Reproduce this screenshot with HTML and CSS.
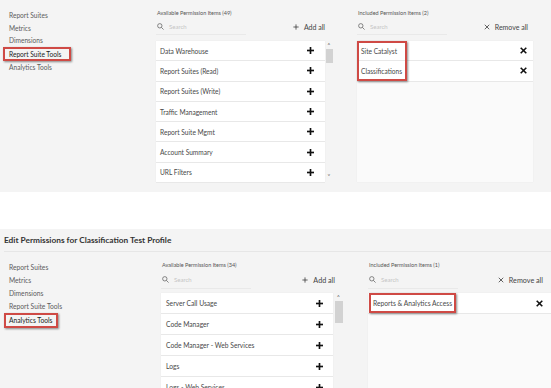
FILE: index.html
```html
<!DOCTYPE html>
<html lang="en">
<head>
<meta charset="UTF-8" />
<meta name="viewport" content="width=device-width, initial-scale=1" />
<title>Edit Permissions</title>
<link rel="stylesheet" href="styles.css">
</head>
<body>
    <!-- first capture: report suite tools -->
    <section class="panel panel-top">
        <div class="editor">
            <ul class="nav">
                <li>Report Suites</li>
                <li>Metrics</li>
                <li>Dimensions</li>
                <li><span class="marked">Report Suite Tools</span></li>
                <li>Analytics Tools</li>
            </ul>
            <div class="col col-avail">
                <div class="col-head">Available Permission Items (49)</div>
                <div class="search-row">
                    <div class="search">
                        <svg class="icon-search" viewBox="0 0 8 8"><circle cx="3.2" cy="3.2" r="2.5"/><line x1="5" y1="5" x2="7.5" y2="7.5"/></svg>
                        <span>Search</span>
                    </div>
                    <div class="action">
                        <svg class="icon-thin" viewBox="0 0 8 8"><line x1="4" y1="0.5" x2="4" y2="7.5"/><line x1="0.5" y1="4" x2="7.5" y2="4"/></svg>
                        Add all
                    </div>
                </div>
                <div class="list">
                    <div class="rows">
                        <div class="row"><span>Data Warehouse</span><svg class="icon-bold" viewBox="0 0 8 8"><line x1="4" y1="0" x2="4" y2="8"/><line x1="0" y1="4" x2="8" y2="4"/></svg></div>
                        <div class="row"><span>Report Suites (Read)</span><svg class="icon-bold" viewBox="0 0 8 8"><line x1="4" y1="0" x2="4" y2="8"/><line x1="0" y1="4" x2="8" y2="4"/></svg></div>
                        <div class="row"><span>Report Suites (Write)</span><svg class="icon-bold" viewBox="0 0 8 8"><line x1="4" y1="0" x2="4" y2="8"/><line x1="0" y1="4" x2="8" y2="4"/></svg></div>
                        <div class="row"><span>Traffic Management</span><svg class="icon-bold" viewBox="0 0 8 8"><line x1="4" y1="0" x2="4" y2="8"/><line x1="0" y1="4" x2="8" y2="4"/></svg></div>
                        <div class="row"><span>Report Suite Mgmt</span><svg class="icon-bold" viewBox="0 0 8 8"><line x1="4" y1="0" x2="4" y2="8"/><line x1="0" y1="4" x2="8" y2="4"/></svg></div>
                        <div class="row"><span>Account Summary</span><svg class="icon-bold" viewBox="0 0 8 8"><line x1="4" y1="0" x2="4" y2="8"/><line x1="0" y1="4" x2="8" y2="4"/></svg></div>
                        <div class="row"><span>URL Filters</span><svg class="icon-bold" viewBox="0 0 8 8"><line x1="4" y1="0" x2="4" y2="8"/><line x1="0" y1="4" x2="8" y2="4"/></svg></div>
                    </div>
                    <div class="scroll">
                        <span class="arrow">&#x2c4;</span>
                        <div class="thumb"></div>
                        <span class="arrow arrow-down">&#x2c5;</span>
                    </div>
                </div>
            </div>
            <div class="col col-incl">
                <div class="col-head">Included Permission Items (2)</div>
                <div class="search-row">
                    <div class="search">
                        <svg class="icon-search" viewBox="0 0 8 8"><circle cx="3.2" cy="3.2" r="2.5"/><line x1="5" y1="5" x2="7.5" y2="7.5"/></svg>
                        <span>Search</span>
                    </div>
                    <div class="action">
                        <svg class="icon-thin" viewBox="0 0 8 8"><line x1="1" y1="1" x2="7" y2="7"/><line x1="7" y1="1" x2="1" y2="7"/></svg>
                        Remove all
                    </div>
                </div>
                <div class="list list-incl">
                    <div class="rows">
                        <div class="row"><span>Site Catalyst</span><svg class="icon-bold" viewBox="0 0 8 8"><line x1="0.8" y1="0.8" x2="7.2" y2="7.2"/><line x1="7.2" y1="0.8" x2="0.8" y2="7.2"/></svg></div>
                        <div class="row"><span>Classifications</span><svg class="icon-bold" viewBox="0 0 8 8"><line x1="0.8" y1="0.8" x2="7.2" y2="7.2"/><line x1="7.2" y1="0.8" x2="0.8" y2="7.2"/></svg></div>
                    </div>
                    <div class="callout callout-two"></div>
                </div>
            </div>
        </div>
    </section>

    <div class="spacer"></div>

    <!-- second capture: analytics tools -->
    <section class="panel panel-bottom">
        <h2 class="title">Edit Permissions for Classification Test Profile</h2>
        <div class="editor">
            <ul class="nav">
                <li>Report Suites</li>
                <li>Metrics</li>
                <li>Dimensions</li>
                <li>Report Suite Tools</li>
                <li><span class="marked">Analytics Tools</span></li>
            </ul>
            <div class="col col-avail">
                <div class="col-head">Available Permission Items (34)</div>
                <div class="search-row">
                    <div class="search">
                        <svg class="icon-search" viewBox="0 0 8 8"><circle cx="3.2" cy="3.2" r="2.5"/><line x1="5" y1="5" x2="7.5" y2="7.5"/></svg>
                        <span>Search</span>
                    </div>
                    <div class="action">
                        <svg class="icon-thin" viewBox="0 0 8 8"><line x1="4" y1="0.5" x2="4" y2="7.5"/><line x1="0.5" y1="4" x2="7.5" y2="4"/></svg>
                        Add all
                    </div>
                </div>
                <div class="list">
                    <div class="rows">
                        <div class="row"><span>Server Call Usage</span><svg class="icon-bold" viewBox="0 0 8 8"><line x1="4" y1="0" x2="4" y2="8"/><line x1="0" y1="4" x2="8" y2="4"/></svg></div>
                        <div class="row"><span>Code Manager</span><svg class="icon-bold" viewBox="0 0 8 8"><line x1="4" y1="0" x2="4" y2="8"/><line x1="0" y1="4" x2="8" y2="4"/></svg></div>
                        <div class="row"><span>Code Manager - Web Services</span><svg class="icon-bold" viewBox="0 0 8 8"><line x1="4" y1="0" x2="4" y2="8"/><line x1="0" y1="4" x2="8" y2="4"/></svg></div>
                        <div class="row"><span>Logs</span><svg class="icon-bold" viewBox="0 0 8 8"><line x1="4" y1="0" x2="4" y2="8"/><line x1="0" y1="4" x2="8" y2="4"/></svg></div>
                        <div class="row"><span>Logs - Web Services</span><svg class="icon-bold" viewBox="0 0 8 8"><line x1="4" y1="0" x2="4" y2="8"/><line x1="0" y1="4" x2="8" y2="4"/></svg></div>
                    </div>
                    <div class="scroll">
                        <span class="arrow">&#x2c4;</span>
                        <div class="thumb"></div>
                    </div>
                </div>
            </div>
            <div class="col col-incl">
                <div class="col-head">Included Permission Items (1)</div>
                <div class="search-row">
                    <div class="search">
                        <svg class="icon-search" viewBox="0 0 8 8"><circle cx="3.2" cy="3.2" r="2.5"/><line x1="5" y1="5" x2="7.5" y2="7.5"/></svg>
                        <span>Search</span>
                    </div>
                    <div class="action">
                        <svg class="icon-thin" viewBox="0 0 8 8"><line x1="1" y1="1" x2="7" y2="7"/><line x1="7" y1="1" x2="1" y2="7"/></svg>
                        Remove all
                    </div>
                </div>
                <div class="list list-incl">
                    <div class="rows">
                        <div class="row"><span>Reports &amp; Analytics Access</span><svg class="icon-bold" viewBox="0 0 8 8"><line x1="0.8" y1="0.8" x2="7.2" y2="7.2"/><line x1="7.2" y1="0.8" x2="0.8" y2="7.2"/></svg></div>
                    </div>
                    <div class="callout callout-one"></div>
                </div>
            </div>
        </div>
    </section>
</body>
</html>
```

FILE: styles.css
```css
:root {
    --panel-bg: #f4f4f4;
    --text: #505050;
    --text-dark: #222;
    --line: #e8e8e8;
    --mark: #cf4a45;
}

body, html {
    margin: 0;
    padding: 0;
    background: #fff;
    font-family: Lato, "Open Sans", sans-serif;
    color: var(--text);
    overflow: hidden;
}

.panel {
    background: var(--panel-bg);
    overflow: hidden;
}

.panel-top {
    height: 192px;
    padding-top: 9px;
    box-sizing: border-box;
}

.spacer {
    height: 37px;
}

.panel-bottom {
    height: 159px;
}

.title {
    margin: 0 0 0 4px;
    height: 22px;
    line-height: 22px;
    font-size: 8.3px;
    font-weight: 700;
    color: #333;
    border-bottom: 1px solid #e6e6e6;
}

.editor {
    display: flex;
}

.panel-bottom .editor {
    padding-top: 9px;
}

/* left menu */
.nav {
    list-style: none;
    margin: 0;
    padding: 0 0 0 9px;
    width: 147px;
    flex-shrink: 0;
    font-size: 6.6px;
    line-height: 12.5px;
    color: #5c5c5c;
}

.panel-bottom .nav {
    width: 152px;
    line-height: 13px;
    font-size: 6.7px;
}

.marked {
    display: inline-block;
    margin-left: -6px;
    padding: 0 8px 0 4px;
    line-height: 10px;
    color: var(--text-dark);
    border: 2px solid var(--mark);
    box-shadow: 1px 1px 2px rgba(0,0,0,0.45);
}

.panel-bottom .marked {
    margin-left: -5px;
    padding: 0 3px 0 3px;
    line-height: 11px;
}

/* columns */
.col-avail {
    width: 177px;
    flex-shrink: 0;
}

.col-incl {
    width: 176px;
    margin-left: 24px;
    flex-shrink: 0;
}

.panel-bottom .col-avail {
    width: 182px;
}

.panel-bottom .col-incl {
    width: 183px;
    margin-left: 25px;
}

.col-head {
    font-size: 5.5px;
    line-height: 8px;
    color: #555;
    padding-left: 1px;
}

.search-row {
    display: flex;
    justify-content: space-between;
    align-items: center;
    height: 17px;
    margin-top: 1px;
}

.panel-bottom .search-row {
    height: 18px;
    margin-top: 2px;
}

.search {
    display: flex;
    align-items: center;
    gap: 5px;
    width: 90px;
    height: 100%;
    padding-left: 1px;
    border-bottom: 1px solid #e9e9e9;
    box-sizing: border-box;
    font-size: 6px;
    color: #c4c4c4;
}

.icon-search {
    width: 7px;
    height: 7px;
    fill: none;
    stroke: #666;
    stroke-width: 0.9;
}

.action {
    display: flex;
    align-items: center;
    gap: 5px;
    font-size: 7px;
    color: #444;
    padding-right: 8px;
}

.col-incl .action {
    padding-right: 5px;
}

.panel-bottom .action {
    font-size: 7.2px;
    padding-right: 8px;
}

.panel-bottom .col-incl .action {
    padding-right: 8px;
}

.icon-thin {
    width: 6px;
    height: 6px;
    stroke: #333;
    stroke-width: 1;
}

/* lists */
.list {
    position: relative;
    display: flex;
    margin-top: 6px;
    height: 141px;
}

.panel-bottom .list {
    margin-top: 4px;
    height: 120px;
}

.rows {
    flex: 1;
    background: #fff;
    box-shadow: 0 0 1px rgba(0,0,0,0.08);
}

.list-incl .rows {
    background: #fafafa;
}

.row {
    display: flex;
    justify-content: space-between;
    align-items: center;
    height: 20.3px;
    box-sizing: border-box;
    padding: 0 11px 0 4px;
    border-bottom: 1px solid var(--line);
    background: #fff;
    font-size: 6.6px;
    color: #484848;
}

.panel-bottom .row {
    height: 21px;
    font-size: 6.7px;
    padding-left: 5px;
    padding-right: 10px;
}

.list-incl .row {
    padding-right: 6px;
}

.panel-bottom .list-incl .row {
    padding-right: 8px;
}

.icon-bold {
    width: 7px;
    height: 7px;
    stroke: #111;
    stroke-width: 1.9;
}

.list-incl .icon-bold {
    stroke-width: 1.8;
}

.scroll {
    width: 8px;
    display: flex;
    flex-direction: column;
    align-items: center;
}

.panel-bottom .scroll {
    width: 9px;
    margin-left: 1px;
}

.arrow {
    font-size: 6px;
    line-height: 6px;
    height: 6px;
    color: #555;
    margin-top: 1px;
}

.arrow-down {
    margin-top: auto;
    margin-bottom: 3px;
}

.thumb {
    width: 7px;
    height: 14px;
    margin-top: 1px;
    background: #d2d2d2;
}

.panel-bottom .thumb {
    width: 8px;
    height: 22px;
}

/* annotation boxes drawn over the lists */
.callout {
    position: absolute;
    border: 2px solid var(--mark);
    box-shadow: 1px 1px 2px rgba(0,0,0,0.45);
    pointer-events: none;
}

.callout-two {
    left: 0;
    top: 0;
    width: 46px;
    height: 36px;
}

.callout-one {
    left: 1px;
    top: 0;
    width: 83px;
    height: 16px;
}
```
